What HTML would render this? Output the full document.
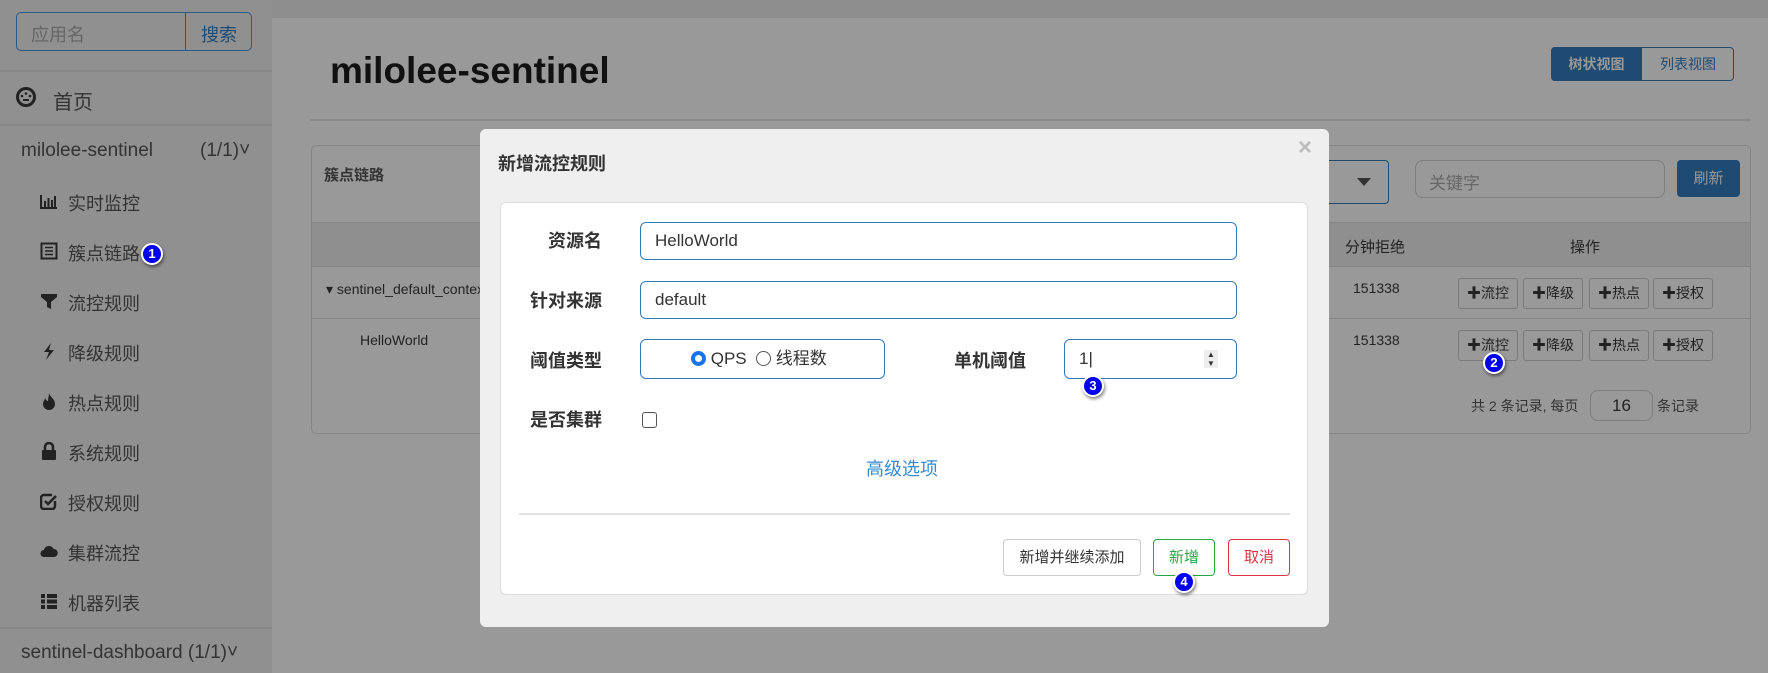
<!DOCTYPE html>
<html><head><meta charset="utf-8"><style>
*{box-sizing:border-box;margin:0;padding:0}
body{width:1768px;height:673px;overflow:hidden;position:relative;background:#999;font-family:"Liberation Sans","Noto Sans CJK SC",sans-serif;color:#1f1f1f}
.a{position:absolute;white-space:nowrap}
#side{left:0;top:0;width:272px;height:673px;background:#909090}
.nav{font-size:18px;color:#333;left:68px}
.ico{position:absolute;left:-28px;top:2px;width:18px;height:18px}
.hr{position:absolute;height:2px;background:#888}
.badge{position:absolute;width:22px;height:22px;border-radius:50%;background:#0000ee;border:2px solid #fff;color:#fff;font-size:13px;font-weight:bold;text-align:center;line-height:18px;box-shadow:1px 2px 3px rgba(0,0,0,.5);z-index:10}
.ob{position:absolute;height:31px;border:1px solid #7a7a7a;border-radius:3px;background:#999;font-size:14px;color:#222;text-align:center;line-height:29px}
.inp{position:absolute;border:1px solid #337ab7;border-radius:6px;background:#fff;font-size:17px;color:#333;padding-left:14px}
.lab{position:absolute;font-size:18px;font-weight:bold;color:#333;text-align:right}
.btn{position:absolute;height:37px;border-radius:4px;background:#fff;font-size:15px;text-align:center;line-height:35px}
</style></head><body>
<div class="a" style="left:272px;top:0;width:1496px;height:18px;background:#8e8e8e"></div>
<div class="a" id="side"></div>
<div class="a" style="left:16px;top:12px;width:236px;height:39px;border:1px solid #2a5a88;border-radius:5px"></div>
<div class="a" style="left:185px;top:12px;width:1px;height:39px;background:#2a5a88"></div>
<div class="a" style="left:31px;top:21px;font-size:18px;color:#666">应用名</div>
<div class="a" style="left:201px;top:21px;font-size:18px;color:#1f4a72">搜索</div>
<div class="hr" style="left:0;top:70px;width:272px"></div>
<svg class="a" style="left:15px;top:86px" width="22" height="22" viewBox="0 0 22 22"><circle cx="11" cy="11" r="8.5" fill="none" stroke="#222" stroke-width="3"/><circle cx="7" cy="10" r="1.3" fill="#222"/><circle cx="11" cy="7.5" r="1.3" fill="#222"/><circle cx="15" cy="10" r="1.3" fill="#222"/><path d="M8 14h6" stroke="#222" stroke-width="2"/></svg>
<div class="a nav" style="left:53px;top:86px;font-size:20px">首页</div>
<div class="hr" style="left:0;top:124px;width:272px"></div>
<div class="a" style="left:21px;top:140px;font-size:19px;color:#333">milolee-sentinel</div>
<div class="a" style="left:200px;top:140px;font-size:19px;color:#333">(1/1)˅</div>
<div class="a nav" style="top:190px"><svg class="ico" viewBox="0 0 18 18"><path d="M1 3v13h16" fill="none" stroke="#222" stroke-width="2"/><rect x="4" y="9" width="2" height="6" fill="#222"/><rect x="7.5" y="6" width="2" height="9" fill="#222"/><rect x="11" y="8" width="2" height="7" fill="#222"/><rect x="14" y="4" width="2" height="11" fill="#222"/></svg>实时监控</div>
<div class="a nav" style="top:240px"><svg class="ico" viewBox="0 0 18 18"><rect x="1.5" y="1.5" width="15" height="15" fill="none" stroke="#222" stroke-width="2"/><path d="M5 5.5h8M5 9h8M5 12.5h8" stroke="#222" stroke-width="1.6"/></svg>簇点链路</div>
<div class="badge" style="left:141px;top:243px">1</div>
<div class="a nav" style="top:290px"><svg class="ico" viewBox="0 0 18 18"><path d="M1 2h16v3l-6 5v7l-4-2v-5L1 5z" fill="#222"/></svg>流控规则</div>
<div class="a nav" style="top:340px"><svg class="ico" viewBox="0 0 18 18"><path d="M11 1L4 10h5l-3 8 8-10H9z" fill="#222"/></svg>降级规则</div>
<div class="a nav" style="top:390px"><svg class="ico" viewBox="0 0 18 18"><path d="M9 1c1 4 6 6 6 11a6 6 0 0 1-12 0c0-3 2-4 2-6 1 2 2 3 3 3 0-3 1-5 1-8z" fill="#222"/></svg>热点规则</div>
<div class="a nav" style="top:440px"><svg class="ico" viewBox="0 0 18 18"><path d="M5 8V5a4 4 0 0 1 8 0v3" fill="none" stroke="#222" stroke-width="2.5"/><rect x="2" y="8" width="14" height="10" rx="1" fill="#222"/></svg>系统规则</div>
<div class="a nav" style="top:490px"><svg class="ico" viewBox="0 0 18 18"><path d="M15 9v5a3 3 0 0 1-3 3H4a3 3 0 0 1-3-3V6a3 3 0 0 1 3-3h8" fill="none" stroke="#222" stroke-width="2.5"/><path d="M5 9l3 3 8-8" fill="none" stroke="#222" stroke-width="2.5"/></svg>授权规则</div>
<div class="a nav" style="top:540px"><svg class="ico" viewBox="0 0 18 18"><path d="M4 15a3.5 3.5 0 0 1 0-7 5 5 0 0 1 9.5-1A4 4 0 0 1 14 15z" fill="#222"/></svg>集群流控</div>
<div class="a nav" style="top:590px"><svg class="ico" viewBox="0 0 18 18"><path d="M1 2h4v4H1zM7 2h10v4H7zM1 7.5h4v4H1zM7 7.5h10v4H7zM1 13h4v4H1zM7 13h10v4H7z" fill="#222"/></svg>机器列表</div>
<div class="hr" style="left:0;top:627px;width:272px"></div>
<div class="a" style="left:21px;top:642px;font-size:19px;color:#333">sentinel-dashboard&nbsp;(1/1)˅</div>

<div class="a" style="left:330px;top:50px;font-size:37px;font-weight:bold;color:#111">milolee-sentinel</div>
<div class="a" style="left:310px;top:119px;width:1441px;height:2px;background:#8a8a8a"></div>
<div class="a" style="left:1551px;top:47px;width:183px;height:34px;border:1px solid #1f4a72;border-radius:4px"></div>
<div class="a" style="left:1551px;top:47px;width:91px;height:34px;background:#1f4a72;border-radius:4px 0 0 4px;color:#999;font-size:14px;line-height:34px;text-align:center;font-weight:bold">树状视图</div>
<div class="a" style="left:1642px;top:47px;width:92px;height:34px;color:#1f4a72;font-size:14px;line-height:34px;text-align:center">列表视图</div>

<div class="a" style="left:311px;top:145px;width:1440px;height:289px;border:1px solid #858585;border-radius:5px"></div>
<div class="a" style="left:324px;top:164px;font-size:15px;font-weight:bold;color:#333">簇点链路</div>
<div class="a" style="left:1300px;top:160px;width:89px;height:44px;border:1px solid #1f4a72;border-radius:0 4px 4px 0"></div>
<div class="a" style="left:1357px;top:178px;border-left:7px solid transparent;border-right:7px solid transparent;border-top:8px solid #333"></div>
<div class="a" style="left:1415px;top:160px;width:250px;height:38px;border:1px solid #7e7e7e;border-radius:8px;font-size:17px;color:#666;padding:8px 13px">关键字</div>
<div class="a" style="left:1677px;top:160px;width:63px;height:37px;background:#1f4a72;border-radius:4px;color:#999;font-size:15px;text-align:center;line-height:37px">刷新</div>
<div class="a" style="left:312px;top:222px;width:1438px;height:45px;background:#8f8f8f;border-top:1px solid #858585;border-bottom:1px solid #858585"></div>
<div class="a" style="left:1345px;top:236px;font-size:15px;color:#222">分钟拒绝</div>
<div class="a" style="left:1570px;top:236px;font-size:15px;color:#222">操作</div>
<div class="a" style="left:312px;top:318px;width:1438px;height:1px;background:#858585"></div>
<div class="a" style="left:326px;top:281px;font-size:14px;color:#222">▾ sentinel_default_context</div>
<div class="a" style="left:360px;top:332px;font-size:14px;color:#222">HelloWorld</div>
<div class="a" style="left:1353px;top:280px;font-size:14px;color:#222">151338</div>
<div class="a" style="left:1353px;top:332px;font-size:14px;color:#222">151338</div>
<div class="ob" style="left:1458px;top:278px;width:60px">✚流控</div>
<div class="ob" style="left:1523px;top:278px;width:60px">✚降级</div>
<div class="ob" style="left:1589px;top:278px;width:60px">✚热点</div>
<div class="ob" style="left:1653px;top:278px;width:60px">✚授权</div>
<div class="ob" style="left:1458px;top:330px;width:60px">✚流控</div>
<div class="ob" style="left:1523px;top:330px;width:60px">✚降级</div>
<div class="ob" style="left:1589px;top:330px;width:60px">✚热点</div>
<div class="ob" style="left:1653px;top:330px;width:60px">✚授权</div>
<div class="badge" style="left:1483px;top:352px">2</div>
<div class="a" style="left:1471px;top:396px;font-size:14px;color:#333">共 2 条记录, 每页</div>
<div class="a" style="left:1590px;top:390px;width:63px;height:31px;border:1px solid #7e7e7e;border-radius:8px;font-size:17px;text-align:center;line-height:29px;color:#222">16</div>
<div class="a" style="left:1657px;top:396px;font-size:14px;color:#333">条记录</div>

<div class="a" style="left:480px;top:129px;width:849px;height:498px;background:#efefef;border-radius:6px"></div>
<div class="a" style="left:498px;top:150px;font-size:18px;font-weight:bold;color:#333">新增流控规则</div>
<div class="a" style="left:1298px;top:134px;font-size:24px;color:#bbb;font-weight:bold">×</div>
<div class="a" style="left:500px;top:202px;width:808px;height:393px;background:#fff;border:1px solid #ddd;border-radius:6px"></div>
<div class="lab" style="left:520px;top:227px;width:82px">资源名</div>
<div class="inp" style="left:640px;top:222px;width:597px;height:38px;line-height:36px">HelloWorld</div>
<div class="lab" style="left:520px;top:287px;width:82px">针对来源</div>
<div class="inp" style="left:640px;top:281px;width:597px;height:38px;line-height:36px">default</div>
<div class="lab" style="left:520px;top:347px;width:82px">阈值类型</div>
<div class="inp" style="left:640px;top:339px;width:245px;height:40px;line-height:38px;padding-left:50px"><span style="display:inline-block;width:15px;height:15px;border-radius:50%;border:4px solid #1a73e8;vertical-align:-2px"></span> QPS &nbsp;<span style="display:inline-block;width:15px;height:15px;border-radius:50%;border:1px solid #555;vertical-align:-2px"></span> 线程数</div>
<div class="lab" style="left:944px;top:347px;width:82px">单机阈值</div>
<div class="inp" style="left:1064px;top:339px;width:173px;height:40px;line-height:38px">1|</div>
<div class="a" style="left:1204px;top:350px;width:14px;height:18px;background:#eee;font-size:8px;line-height:9px;text-align:center;color:#333">▲<br>▼</div>
<div class="badge" style="left:1082px;top:375px">3</div>
<div class="lab" style="left:520px;top:406px;width:82px">是否集群</div>
<div class="a" style="left:642px;top:412px;width:15px;height:16px;border:1px solid #555;border-radius:3px"></div>
<div class="a" style="left:866px;top:455px;font-size:18px;color:#3a8bd2">高级选项</div>
<div class="a" style="left:519px;top:513px;width:771px;height:2px;background:#e0e0e0"></div>
<div class="btn" style="left:1003px;top:539px;width:138px;border:1px solid #ccc;color:#333">新增并继续添加</div>
<div class="btn" style="left:1153px;top:539px;width:62px;border:1px solid #28a745;color:#28a745">新增</div>
<div class="btn" style="left:1228px;top:539px;width:62px;border:1px solid #dc3545;color:#dc3545">取消</div>
<div class="badge" style="left:1173px;top:571px">4</div>
</body></html>
